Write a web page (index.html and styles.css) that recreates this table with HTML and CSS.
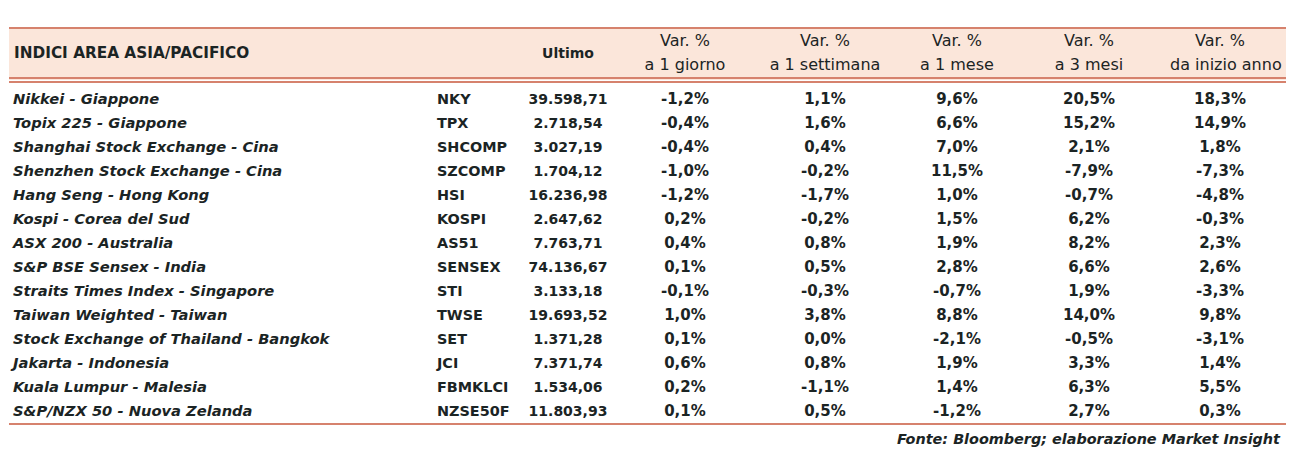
FILE: index.html
```html
<!DOCTYPE html>
<html lang="it">
<head>
<meta charset="utf-8">
<title>Indici Area Asia/Pacifico</title>
<link rel="stylesheet" href="styles.css">
</head>
<body>
<div class="page">
  <table class="indici">
    <colgroup>
      <col class="c-name"><col class="c-tick"><col class="c-ult"><col class="c-1g"><col class="c-1s"><col class="c-1m"><col class="c-3m"><col class="c-ya"><col class="c-pad">
    </colgroup>
    <thead>
      <tr>
        <th class="title">INDICI AREA ASIA/PACIFICO</th>
        <th></th>
        <th class="ultimo">Ultimo</th>
        <th class="var"><span>Var. %</span><span>a 1 giorno</span></th>
        <th class="var"><span>Var. %</span><span>a 1 settimana</span></th>
        <th class="var"><span>Var. %</span><span>a 1 mese</span></th>
        <th class="var"><span>Var. %</span><span>a 3 mesi</span></th>
        <th class="var"><span>Var. %</span><span>da inizio anno</span></th>
        <th></th>
      </tr>
    </thead>
    <tbody>
      <tr><td class="name">Nikkei - Giappone</td><td class="tick">NKY</td><td class="ult">39.598,71</td><td>-1,2%</td><td>1,1%</td><td>9,6%</td><td>20,5%</td><td>18,3%</td><td></td></tr>
      <tr><td class="name">Topix 225 - Giappone</td><td class="tick">TPX</td><td class="ult">2.718,54</td><td>-0,4%</td><td>1,6%</td><td>6,6%</td><td>15,2%</td><td>14,9%</td><td></td></tr>
      <tr><td class="name">Shanghai Stock Exchange - Cina</td><td class="tick">SHCOMP</td><td class="ult">3.027,19</td><td>-0,4%</td><td>0,4%</td><td>7,0%</td><td>2,1%</td><td>1,8%</td><td></td></tr>
      <tr><td class="name">Shenzhen Stock Exchange - Cina</td><td class="tick">SZCOMP</td><td class="ult">1.704,12</td><td>-1,0%</td><td>-0,2%</td><td>11,5%</td><td>-7,9%</td><td>-7,3%</td><td></td></tr>
      <tr><td class="name">Hang Seng - Hong Kong</td><td class="tick">HSI</td><td class="ult">16.236,98</td><td>-1,2%</td><td>-1,7%</td><td>1,0%</td><td>-0,7%</td><td>-4,8%</td><td></td></tr>
      <tr><td class="name">Kospi - Corea del Sud</td><td class="tick">KOSPI</td><td class="ult">2.647,62</td><td>0,2%</td><td>-0,2%</td><td>1,5%</td><td>6,2%</td><td>-0,3%</td><td></td></tr>
      <tr><td class="name">ASX 200 - Australia</td><td class="tick">AS51</td><td class="ult">7.763,71</td><td>0,4%</td><td>0,8%</td><td>1,9%</td><td>8,2%</td><td>2,3%</td><td></td></tr>
      <tr><td class="name">S&amp;P BSE Sensex - India</td><td class="tick">SENSEX</td><td class="ult">74.136,67</td><td>0,1%</td><td>0,5%</td><td>2,8%</td><td>6,6%</td><td>2,6%</td><td></td></tr>
      <tr><td class="name">Straits Times Index - Singapore</td><td class="tick">STI</td><td class="ult">3.133,18</td><td>-0,1%</td><td>-0,3%</td><td>-0,7%</td><td>1,9%</td><td>-3,3%</td><td></td></tr>
      <tr><td class="name">Taiwan Weighted - Taiwan</td><td class="tick">TWSE</td><td class="ult">19.693,52</td><td>1,0%</td><td>3,8%</td><td>8,8%</td><td>14,0%</td><td>9,8%</td><td></td></tr>
      <tr><td class="name">Stock Exchange of Thailand - Bangkok</td><td class="tick">SET</td><td class="ult">1.371,28</td><td>0,1%</td><td>0,0%</td><td>-2,1%</td><td>-0,5%</td><td>-3,1%</td><td></td></tr>
      <tr><td class="name">Jakarta - Indonesia</td><td class="tick">JCI</td><td class="ult">7.371,74</td><td>0,6%</td><td>0,8%</td><td>1,9%</td><td>3,3%</td><td>1,4%</td><td></td></tr>
      <tr><td class="name">Kuala Lumpur - Malesia</td><td class="tick">FBMKLCI</td><td class="ult">1.534,06</td><td>0,2%</td><td>-1,1%</td><td>1,4%</td><td>6,3%</td><td>5,5%</td><td></td></tr>
      <tr><td class="name">S&amp;P/NZX 50 - Nuova Zelanda</td><td class="tick">NZSE50FG</td><td class="ult">11.803,93</td><td>0,1%</td><td>0,5%</td><td>-1,2%</td><td>2,7%</td><td>0,3%</td><td></td></tr>
    </tbody>
  </table>
  <p class="fonte">Fonte: Bloomberg; elaborazione Market Insight</p>
</div>
</body>
</html>
```

FILE: styles.css
```css
html, body {
  margin: 0;
  padding: 0;
  background: #ffffff;
}

.page {
  padding: 27px 11px 0 9px;
  font-family: "DejaVu Sans", "Liberation Sans", sans-serif;
  color: #1b2424;
}

.indici {
  width: 1277px;
  border-collapse: collapse;
  table-layout: fixed;
}

.c-name { width: 426px; }
.c-tick { width: 75px; }
.c-ult { width: 116px; }
.c-1g { width: 118px; }
.c-1s { width: 162px; }
.c-1m { width: 102px; }
.c-3m { width: 162px; }
.c-ya { width: 100px; }
.c-pad { width: 16px; }

.indici thead tr {
  background: #fbe6da;
  border-top: 2px solid #d6826d;
  border-bottom: 6px double #d6826d;
}

.indici th {
  height: 48px;
  padding: 0;
  font-weight: normal;
  font-size: 16px;
  vertical-align: middle;
  white-space: nowrap;
}

.indici th.title {
  text-align: left;
  padding-left: 5px;
  font-weight: bold;
  font-size: 15.3px;
}

.indici th.ultimo {
  font-weight: bold;
  font-size: 14px;
  text-align: center;
}

.indici th.var span {
  display: block;
  line-height: 24px;
}

.indici tbody tr:first-child td {
  padding-top: 4px;
}

.indici tbody tr:last-child td {
  border-bottom: 2px solid #d6826d;
}

.indici td {
  height: 24px;
  padding: 0;
  font-size: 15px;
  font-weight: bold;
  text-align: center;
  white-space: nowrap;
  line-height: 24px;
}

.indici td.ult {
  font-size: 14px;
}

.indici td.name {
  text-align: left;
  font-style: italic;
  font-size: 14.7px;
  padding-left: 4px;
}

.indici td.tick {
  text-align: left;
  padding-left: 2px;
  font-size: 14.4px;
  overflow: hidden;
  text-overflow: clip;
}

.fonte {
  margin: 2px 0 0;
  padding-right: 6px;
  text-align: right;
  font-size: 14.4px;
  font-weight: bold;
  font-style: italic;
  line-height: 24px;
}
```
